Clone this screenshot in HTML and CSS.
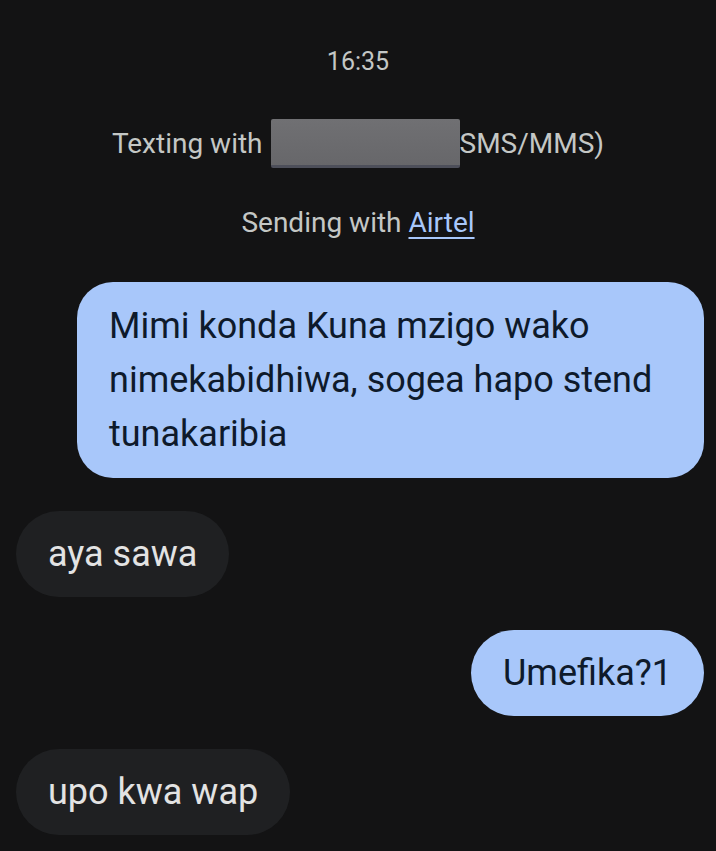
FILE: index.html
```html
<!DOCTYPE html>
<html lang="sw">
<head>
  <meta charset="UTF-8" />
  <meta name="viewport" content="width=device-width, initial-scale=1" />
  <title>Messages</title>
  <link rel="stylesheet" href="styles.css">
</head>
<body>

<section class="info">
  <div class="time">16:35</div>
  <div class="texting">Texting with <span class="redact"></span>SMS/MMS)</div>
  <div class="sending">Sending with <a href="#">Airtel</a></div>
</section>

<section class="thread">
  <div class="msg sent big">Mimi konda Kuna mzigo wako nimekabidhiwa, sogea hapo stend tunakaribia</div>
  <div class="msg recv">aya sawa</div>
  <div class="msg sent">Umefika?1</div>
  <div class="msg recv">upo kwa wap</div>
</section>

</body>
</html>
```
FILE: styles.css
```css
body {
  margin: 0;
  background-color: #131314;
  font-family: Roboto, 'Noto Sans', sans-serif;
  color: #c4c7c5;
  height: 851px;
  overflow: hidden;
}
.info {
  display: flex;
  flex-direction: column;
  align-items: center;
  padding-top: 46px;
}
.time {
  font-size: 25px;
  line-height: 32px;
}
.texting {
  display: flex;
  align-items: center;
  margin-top: 41px;
  font-size: 28px;
  line-height: 34px;
}
.redact {
  display: inline-block;
  width: 189px;
  height: 46px;
  margin-left: 8px;
  background: linear-gradient(180deg, #707073, #67676a);
  border-bottom: 3px solid #4d4f5a;
  border-radius: 2px;
}
.sending {
  margin-top: 38px;
  font-size: 28px;
  line-height: 34px;
}
.sending a {
  color: #a8c7fa;
  text-decoration: underline;
  text-underline-offset: 5px;
}
.thread {
  display: flex;
  flex-direction: column;
  gap: 33px;
  padding: 42px 12px 0 16px;
}
.msg {
  font-size: 36px;
  line-height: 54px;
  padding: 16px 32px;
  border-radius: 43px;
  max-width: 563px;
}
.msg.big {
  padding: 17px 32px;
  border-radius: 36px;
}
.sent {
  align-self: flex-end;
  background-color: #a8c7fa;
  color: #0e1a2b;
}
.recv {
  align-self: flex-start;
  background-color: #1f2022;
  color: #e3e3e3;
}
```
